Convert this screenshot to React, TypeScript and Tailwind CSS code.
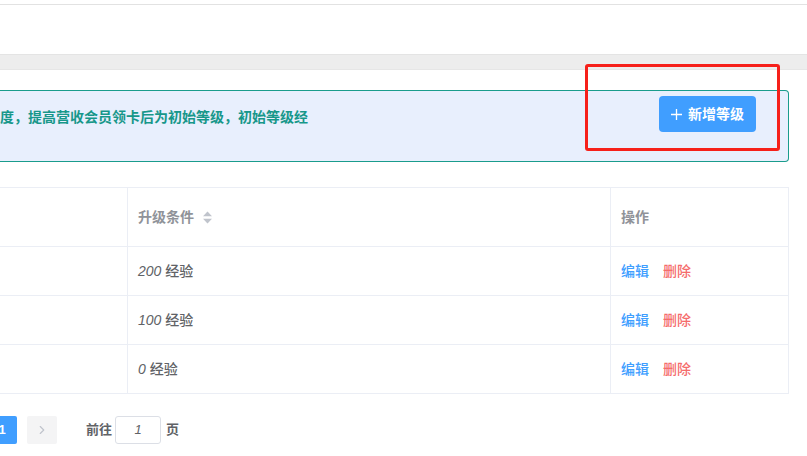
import { ChevronRight } from 'lucide-react'

const LEVELS = [
  { id: 1, exp: '200' },
  { id: 2, exp: '100' },
  { id: 3, exp: '0' },
]

function SortCaret() {
  return (
    <svg width="11" height="13" viewBox="0 0 11 13" className="ml-[8px]">
      <path d="M5.5 0.5 L10 5.2 L1 5.2 Z" fill="#c0c4cc" />
      <path d="M5.5 12.5 L10 7.8 L1 7.8 Z" fill="#c0c4cc" />
    </svg>
  )
}

export default function App() {
  return (
    <div
      className="relative w-[807px] h-[456px] overflow-hidden bg-white text-[14px] text-[#606266]"
      style={{ fontFamily: '"Liberation Sans", "Noto Sans CJK SC", sans-serif' }}
    >
      {/* header strip */}
      <div className="h-[4px] bg-white" />
      <div className="h-px bg-[#e2e2e2] shadow-[0_1px_2px_rgba(0,0,0,0.06)]" />
      <div className="h-[49px] bg-white" />
      {/* tab bar gap */}
      <div className="h-[16px] bg-[#ededed] border-t border-[#e4e4e4] border-b border-b-[#e6e6e6]" />

      <div className="w-[789px] pt-[20px]">
        {/* notice */}
        <div className="h-[72px] bg-[#e8effd] border border-l-0 border-[#1a9c8c] rounded-r-[4px] pt-[5px] flex justify-between items-start">
          <p className="mt-[11px] leading-[20px] font-bold text-[#17978a] whitespace-nowrap">
            度，提高营收会员领卡后为初始等级，初始等级经
          </p>
          <button className="mr-[32px] w-[97px] h-[36px] rounded-[4px] bg-[#409eff] text-white font-bold flex items-center justify-center gap-[6px]">
            <svg width="11" height="11" viewBox="0 0 11 11">
              <path d="M5.5 0 V11 M0 5.5 H11" stroke="white" strokeWidth="1.3" />
            </svg>
            新增等级
          </button>
        </div>

        {/* level table */}
        <div className="mt-[25px] border-t border-[#ebeef5]">
          <div className="flex h-[59px] border-b border-[#ebeef5] text-[#909399] font-bold">
            <div className="w-[128px] border-r border-[#ebeef5]" />
            <div className="w-[483px] border-r border-[#ebeef5] pl-[10px] flex items-center">
              升级条件
              <SortCaret />
            </div>
            <div className="w-[178px] border-r border-[#ebeef5] pl-[10px] flex items-center">操作</div>
          </div>
          {LEVELS.map(l => (
            <div key={l.id} className="flex h-[49px] border-b border-[#ebeef5]">
              <div className="w-[128px] border-r border-[#ebeef5]" />
              <div className="w-[483px] border-r border-[#ebeef5] pl-[10px] flex items-center font-medium">
                <span className="italic font-normal">{l.exp}</span>
                <span className="ml-[4px]">经验</span>
              </div>
              <div className="w-[178px] border-r border-[#ebeef5] pl-[10px] flex items-center gap-[14px] font-medium">
                <span className="text-[#409eff]">编辑</span>
                <span className="text-[#f56c6c]">删除</span>
              </div>
            </div>
          ))}
        </div>

        {/* pagination */}
        <div className="mt-[22px] flex items-center text-[13px]">
          <div className="-ml-[13px] w-[30px] h-[28px] rounded-[2px] bg-[#409eff] text-white font-bold flex items-center justify-center">
            1
          </div>
          <div className="ml-[10px] w-[30px] h-[28px] rounded-[2px] bg-[#f4f4f5] flex items-center justify-center">
            <ChevronRight size={14} strokeWidth={2} color="#c0c4cc" />
          </div>
          <span className="ml-[29px] text-[#606266] font-bold">前往</span>
          <div className="ml-[3px] w-[46px] h-[28px] rounded-[3px] border border-[#dcdfe6] flex items-center justify-center italic">
            1
          </div>
          <span className="ml-[5px] text-[#606266] font-bold">页</span>
        </div>
      </div>

      {/* highlight frame */}
      <div className="absolute left-[585px] top-[64px] w-[195px] h-[87px] border-[3px] border-[#f6201a] rounded-[3px]" />
    </div>
  )
}
